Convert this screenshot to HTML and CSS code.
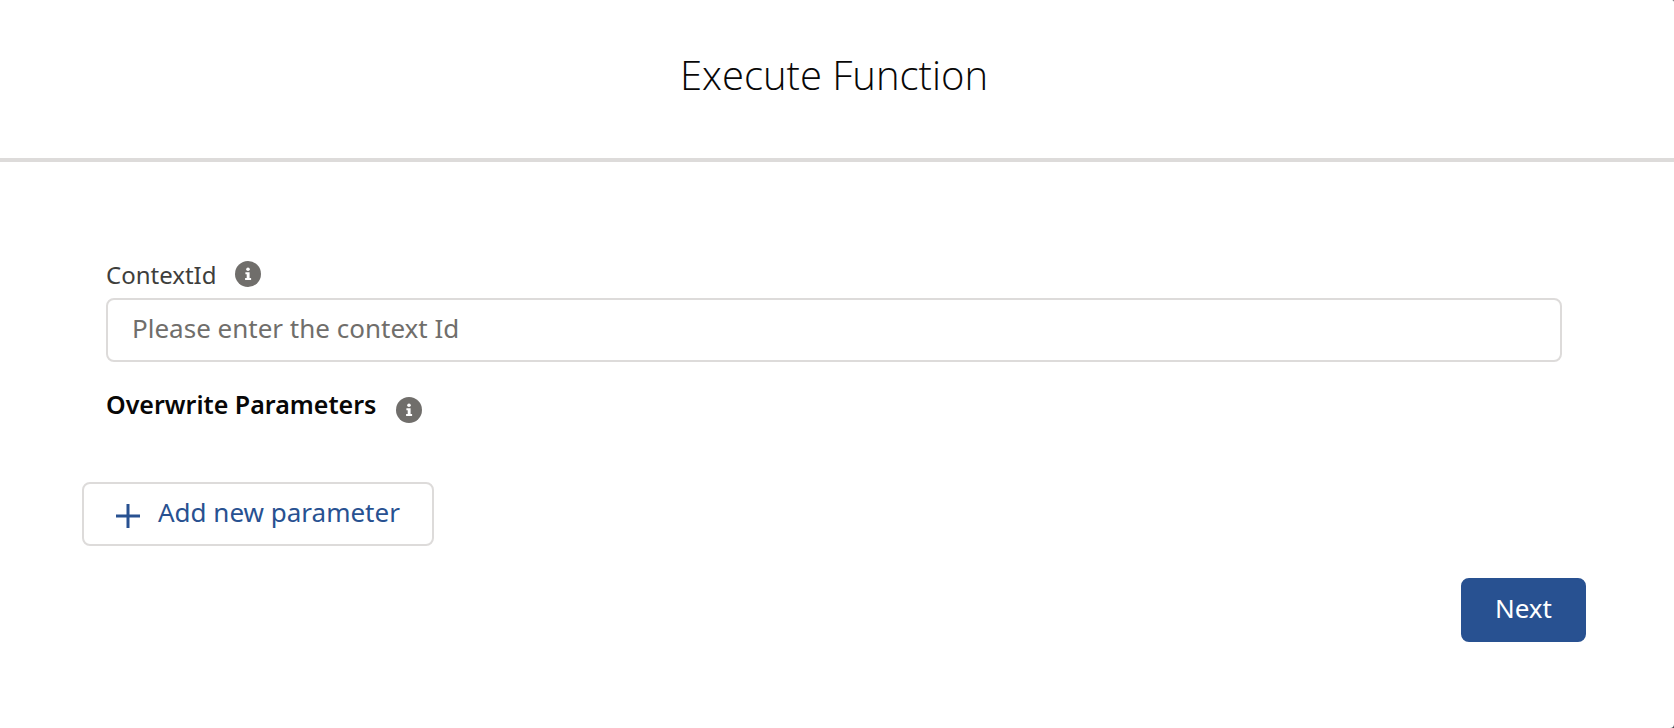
FILE: index.html
```html
<!DOCTYPE html>
<html lang="en">
<head>
  <meta charset="UTF-8">
  <title>Execute Function</title>
  <link rel="stylesheet" href="styles.css">
</head>
<body>

  <main class="modal">
    <header class="modal-header">
      <h1>Execute Function</h1>
    </header>

    <form class="modal-content">
      <div class="field">
        <div class="field-label">
          <label for="contextId">ContextId</label>
          <button type="button" class="help" aria-label="Help for ContextId">
            <svg viewBox="0 0 26 26" aria-hidden="true">
              <circle cx="13" cy="13" r="13"/>
              <circle class="mark" cx="13" cy="8.3" r="1.8"/>
              <path class="mark" d="M10.4 11.3h4.2v5.8h1.5v1.9h-6v-1.9h1.6v-3.9h-1.3z"/>
            </svg>
          </button>
        </div>
        <input type="text" id="contextId" placeholder="Please enter the context Id">
      </div>

      <div class="section-title">
        <h2>Overwrite Parameters</h2>
        <button type="button" class="help" aria-label="Help for Overwrite Parameters">
          <svg viewBox="0 0 26 26" aria-hidden="true">
            <circle cx="13" cy="13" r="13"/>
            <circle class="mark" cx="13" cy="8.3" r="1.8"/>
            <path class="mark" d="M10.4 11.3h4.2v5.8h1.5v1.9h-6v-1.9h1.6v-3.9h-1.3z"/>
          </svg>
        </button>
      </div>

      <button type="button" class="btn btn-neutral">
        <svg class="plus" viewBox="0 0 24 24" aria-hidden="true">
          <path d="M12 0v24M0 12h24"/>
        </svg>
        Add new parameter
      </button>

      <div class="actions">
        <button type="submit" class="btn btn-brand">Next</button>
      </div>
    </form>
  </main>

</body>
</html>
```

FILE: styles.css
```css
* {
  box-sizing: border-box;
}

body {
  margin: 0;
  background-color: #4a4f57;
  color: #080707;
  font-family: "Noto Sans", sans-serif;
  font-size: 26px;
}

.modal {
  min-height: 100vh;
  background-color: #fff;
  border-radius: 0 2px 4px 0;
}

.modal-header {
  padding: 50px 88px 58px 82px;
  border-bottom: 4px solid #dddbda;
  text-align: center;
}

h1 {
  margin: 0;
  font-family: "Open Sans", sans-serif;
  font-size: 40px;
  font-weight: 300;
  line-height: 50px;
}

.modal-content {
  padding: 96px 88px 86px 82px;
}

.field,
.section-title {
  padding: 0 24px;
}

.field-label {
  display: flex;
  align-items: center;
  gap: 18px;
  height: 32px;
  margin-bottom: 8px;
  color: #3e3e3c;
  font-size: 24px;
}

.help {
  width: 26px;
  height: 26px;
  padding: 0;
  border: none;
  background: none;
  cursor: pointer;
}

.help svg {
  display: block;
  fill: #706e6b;
}

.help .mark {
  fill: #fff;
}

input {
  display: block;
  width: 100%;
  height: 64px;
  padding: 0 24px 4px;
  border: 2px solid #dddbda;
  border-radius: 8px;
  font: inherit;
}

input::placeholder {
  color: #706e6b;
}

.section-title {
  display: flex;
  gap: 20px;
  margin: 24px 0 56px;
}

.section-title .help {
  margin-top: 11px;
}

h2 {
  margin: 0;
  font-size: 25px;
  font-weight: 600;
  line-height: 37px;
}

.section-title {
  height: 40px;
}

.btn {
  display: flex;
  align-items: center;
  height: 64px;
  padding: 0 32px 4px;
  border: 2px solid #dddbda;
  border-radius: 8px;
  font: inherit;
  cursor: pointer;
}

.btn-neutral {
  background-color: #fff;
  color: #285191;
}

.btn-brand {
  border-color: #285191;
  background-color: #285191;
  color: #fff;
}

.plus {
  width: 24px;
  height: 24px;
  margin-top: 8px;
  margin-right: 18px;
  fill: none;
  stroke: currentColor;
  stroke-width: 3;
}

.actions {
  display: flex;
  justify-content: flex-end;
  margin-top: 32px;
}
```
